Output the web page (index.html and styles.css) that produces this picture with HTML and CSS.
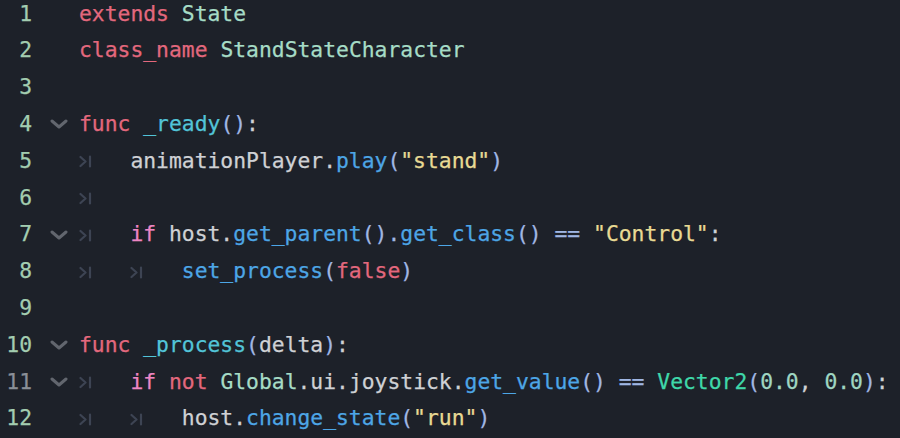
FILE: index.html
```html
<!DOCTYPE html>
<html>
<head>
<meta charset="utf-8">
<link rel="stylesheet" href="styles.css">
</head>
<body>
<div class="editor">
  <div class="line"><span class="ln">1</span><span class="fold"></span><span class="code"><span class="kw">extends</span> <span class="ty">State</span></span></div>
  <div class="line"><span class="ln">2</span><span class="fold"></span><span class="code"><span class="kw">class_name</span> <span class="ty">StandStateCharacter</span></span></div>
  <div class="line"><span class="ln">3</span><span class="fold"></span><span class="code"></span></div>
  <div class="line"><span class="ln">4</span><span class="fold"><svg class="chev" viewBox="0 0 18 10"><path d="M2 2 L9 8 L16 2"/></svg></span><span class="code"><span class="kw">func</span> <span class="fd">_ready</span><span class="sy">()</span><span class="tx">:</span></span></div>
  <div class="line"><span class="ln">5</span><span class="fold"></span><span class="code"><span class="tab"><svg viewBox="0 0 13 13"><path d="M1.5 2 L6.5 6.5 L1.5 11 M11 1.5 L11 11.5"/></svg></span><span class="tx">animationPlayer.</span><span class="fn">play</span><span class="sy">(</span><span class="st">"stand"</span><span class="sy">)</span></span></div>
  <div class="line"><span class="ln">6</span><span class="fold"></span><span class="code"><span class="tab"><svg viewBox="0 0 13 13"><path d="M1.5 2 L6.5 6.5 L1.5 11 M11 1.5 L11 11.5"/></svg></span></span></div>
  <div class="line"><span class="ln">7</span><span class="fold"><svg class="chev" viewBox="0 0 18 10"><path d="M2 2 L9 8 L16 2"/></svg></span><span class="code"><span class="tab"><svg viewBox="0 0 13 13"><path d="M1.5 2 L6.5 6.5 L1.5 11 M11 1.5 L11 11.5"/></svg></span><span class="cf">if</span> <span class="tx">host.</span><span class="fn">get_parent</span><span class="sy">().</span><span class="fn">get_class</span><span class="sy">() == </span><span class="st">"Control"</span><span class="tx">:</span></span></div>
  <div class="line"><span class="ln">8</span><span class="fold"></span><span class="code"><span class="tab"><svg viewBox="0 0 13 13"><path d="M1.5 2 L6.5 6.5 L1.5 11 M11 1.5 L11 11.5"/></svg></span><span class="tab"><svg viewBox="0 0 13 13"><path d="M1.5 2 L6.5 6.5 L1.5 11 M11 1.5 L11 11.5"/></svg></span><span class="fn">set_process</span><span class="sy">(</span><span class="kw">false</span><span class="sy">)</span></span></div>
  <div class="line"><span class="ln">9</span><span class="fold"></span><span class="code"></span></div>
  <div class="line"><span class="ln">10</span><span class="fold"><svg class="chev" viewBox="0 0 18 10"><path d="M2 2 L9 8 L16 2"/></svg></span><span class="code"><span class="kw">func</span> <span class="fd">_process</span><span class="sy">(</span><span class="tx">delta</span><span class="sy">)</span><span class="tx">:</span></span></div>
  <div class="line"><span class="ln unsafe">11</span><span class="fold"><svg class="chev" viewBox="0 0 18 10"><path d="M2 2 L9 8 L16 2"/></svg></span><span class="code"><span class="tab"><svg viewBox="0 0 13 13"><path d="M1.5 2 L6.5 6.5 L1.5 11 M11 1.5 L11 11.5"/></svg></span><span class="cf">if</span> <span class="kw">not</span> <span class="ty">Global</span><span class="tx">.ui.joystick.</span><span class="fn">get_value</span><span class="sy">() == </span><span class="bt">Vector2</span><span class="sy">(</span><span class="nu">0.0</span><span class="tx">, </span><span class="nu">0.0</span><span class="sy">)</span><span class="tx">:</span></span></div>
  <div class="line"><span class="ln">12</span><span class="fold"></span><span class="code"><span class="tab"><svg viewBox="0 0 13 13"><path d="M1.5 2 L6.5 6.5 L1.5 11 M11 1.5 L11 11.5"/></svg></span><span class="tab"><svg viewBox="0 0 13 13"><path d="M1.5 2 L6.5 6.5 L1.5 11 M11 1.5 L11 11.5"/></svg></span><span class="tx">host.</span><span class="fn">change_state</span><span class="sy">(</span><span class="st">"run"</span><span class="sy">)</span></span></div>
</div>
</body>
</html>
```

FILE: styles.css
```css
html, body {
  margin: 0;
  padding: 0;
  background: #1d2129;
  overflow: hidden;
}

.editor {
  display: flex;
  flex-direction: column;
  margin-top: -4.4px;
  font-family: "DejaVu Sans Mono", "Liberation Mono", monospace;
  font-size: 21.35px;
  color: #cfd1d5;
  -webkit-text-stroke: 0.25px currentColor;
}

.line {
  display: flex;
  align-items: center;
  height: 36.8px;
  line-height: 36.8px;
  white-space: pre;
}

.ln {
  width: 32px;
  text-align: right;
  color: #a3cdb0;
  flex: none;
}

.ln.unsafe {
  color: #8a8f97;
}

.fold {
  width: 47px;
  flex: none;
  display: flex;
  align-items: center;
  padding-left: 18px;
  box-sizing: border-box;
}

.chev {
  width: 18px;
  height: 10px;
  fill: none;
  stroke: #62666e;
  stroke-width: 3;
  stroke-linecap: round;
  stroke-linejoin: round;
}

.code {
  display: block;
  white-space: pre;
}

.tab {
  display: inline-block;
  width: 51.4px;
  vertical-align: middle;
  line-height: 0;
}

.tab svg {
  width: 13px;
  height: 13px;
  fill: none;
  stroke: #3d4453;
  stroke-width: 2.2;
  stroke-linecap: round;
  stroke-linejoin: round;
}

.kw { color: #e3687d; }
.cf { color: #ee86c4; }
.ty { color: #a6dcc6; }
.fd { color: #52c4d8; }
.fn { color: #4da6e6; }
.sy { color: #a0b7e4; }
.tx { color: #cfd1d5; }
.st { color: #e8da94; }
.bt { color: #3fd8a9; }
.nu { color: #9fd6c2; }
```
